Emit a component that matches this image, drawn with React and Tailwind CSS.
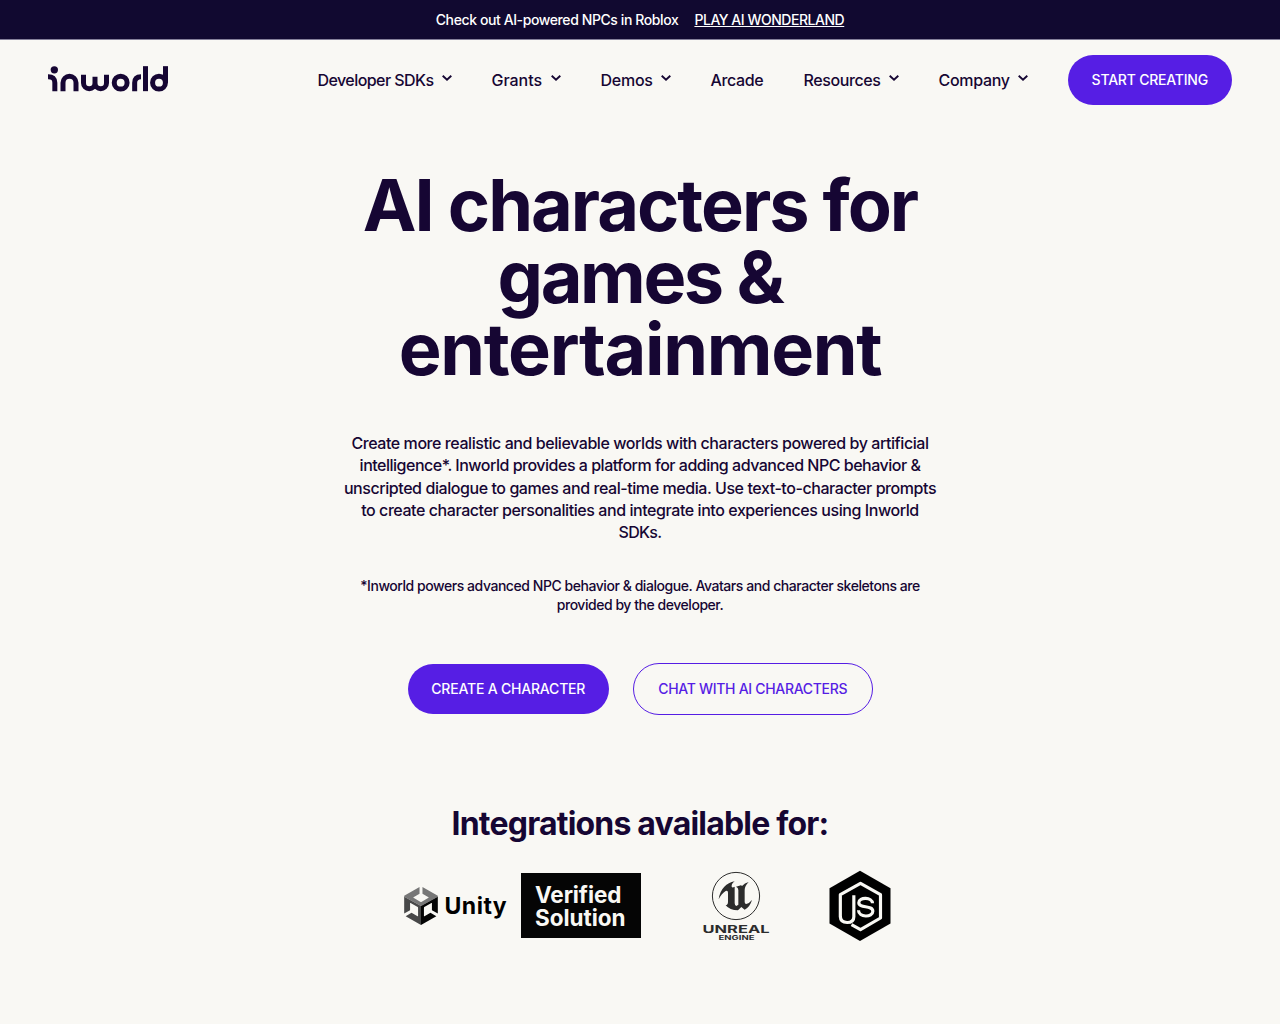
import { SiUnity } from "react-icons/si";

function InworldLogo() {
  return (
    <svg width="120" height="26" viewBox="54 47.500 360 78" fill="none" stroke="#160633" strokeWidth="15" role="img" aria-label="inworld">
      <circle cx="73" cy="59" r="11" fill="#160633" stroke="none" />
      <path d="M54 79.500Q74.500 79 74.500 98V123" />
      <path d="M99 123V98a19.500 19.500 0 0 1 39 0v25" />
      <path d="M160.500 74v24.500a17.250 17.250 0 0 0 34.500 0V80v18.500a17.250 17.250 0 0 0 34.500 0V74" />
      <circle cx="272" cy="97.500" r="19.300" />
      <path d="M314 123V98q0-18.500 19-18.500" />
      <path d="M346.500 48v75" />
      <circle cx="387" cy="97.500" r="19.300" />
      <path d="M406.500 48v50" />
    </svg>
  );
}

function Chevron() {
  return (
    <svg className="mb-[4px] ml-2 shrink-0" width="10" height="6" viewBox="0 0 10 6" fill="none" stroke="#160633" strokeWidth="1.9">
      <path d="M.7.800 5 4.700 9.300.800" />
    </svg>
  );
}

const navItems = [
  { label: "Developer SDKs", cls: "w-[116px] tracking-[-0.56px]", menu: true },
  { label: "Grants", cls: "w-[51px] tracking-[-0.02px]", menu: true },
  { label: "Demos", cls: "w-[52px] tracking-[-0.25px]", menu: true },
  { label: "Arcade", cls: "w-[53px] tracking-[-0.35px]", menu: false },
  { label: "Resources", cls: "w-[77px] tracking-[-0.4px]", menu: true },
  { label: "Company", cls: "w-[71px] tracking-[-0.3px]", menu: true },
];

const intro = [
  ["Create more realistic and believable worlds with characters powered by artificial", "tracking-[-0.435px]"],
  ["intelligence*. Inworld provides a platform for adding advanced NPC behavior &", "tracking-[-0.49px]"],
  ["unscripted dialogue to games and real-time media. Use text-to-character prompts", "tracking-[-0.43px]"],
  ["to create character personalities and integrate into experiences using Inworld", "tracking-[-0.43px]"],
  ["SDKs.", "tracking-[-0.7px]"],
];

function UnityMark() {
  return (
    <svg width="38" height="38" viewBox="0 0 24 24">
      <clipPath id="cube-top"><path d="M0 0H24V5.300L12 12 0 5.300z" /></clipPath>
      <clipPath id="cube-left"><path d="M0 5.300 12 12v12H0z" /></clipPath>
      <clipPath id="cube-right"><path d="M24 5.300 12 12v12h12z" /></clipPath>
      <g clipPath="url(#cube-top)"><SiUnity size={24} color="#777" /></g>
      <g clipPath="url(#cube-left)"><SiUnity size={24} color="#484848" /></g>
      <g clipPath="url(#cube-right)"><SiUnity size={24} color="#050505" /></g>
    </svg>
  );
}

function UnrealLogo() {
  return (
    <svg width="68" height="72" viewBox="702 870 68 72" fill="#2c2c2c">
      <circle cx="736" cy="896" r="23.600" fill="none" stroke="#2c2c2c" strokeWidth="1" />
      <g transform="translate(690 860) scale(.33333)">
        <path d="M86 118Q89 94 103 80 115 68 134 64 124 71 125 80 127 85 134 80V129Q134 137 139 138L145 134V90Q145 82 138 80L148 77Q154 74 156 78 164 69 176 66 164 78 164 90V126Q164 132 169 132 178 130 186 120 180 141 164 149L154 141 144 151Q119 151 107 136 114 135 114 126V98Q114 90 107 93 95 100 86 118Z" />
      </g>
      <text x="702.500" y="933.200" className="font-['Inter'] font-bold" fontSize="10.5" textLength="67" lengthAdjust="spacingAndGlyphs">UNREAL</text>
      <text x="718.500" y="940.300" className="font-['Inter'] font-bold" fontSize="6.5" textLength="36" lengthAdjust="spacingAndGlyphs">ENGINE</text>
    </svg>
  );
}

function NodeLogo() {
  return (
    <svg width="62" height="72" viewBox="829.500 870 62 72">
      <path d="M860.500 870.800 891 888.300v35.200L860.500 941 830 923.500v-35.200z" />
      <g transform="translate(690 860) scale(.33333)" fill="none" stroke="#f9f8f4" strokeWidth="9.5">
        <path strokeLinejoin="round" d="M486 194 513 209 573 174V104L513 70 452.500 104V170Q453 187 473 187.500 493 187 493 170V106" />
        <path d="M549 130C549 111 508 110 508 128 508 146 550 134 550 154 550 173 507 173 507 151" />
      </g>
    </svg>
  );
}

export default function App() {
  return (
    <div className="flex h-[1024px] w-[1280px] flex-col overflow-hidden bg-[#f9f8f4] font-['Inter',sans-serif] font-medium whitespace-nowrap text-[#160633]">
      <div className="flex h-10 shrink-0 items-center justify-center gap-4 border-b border-[#85809a] bg-[#110930] text-sm text-white">
        <span className="tracking-[-0.4px]">Check out AI-powered NPCs in Roblox</span>
        <a className="tracking-[-0.46px] underline">PLAY AI WONDERLAND</a>
      </div>

      <header className="flex h-[79px] shrink-0 items-center justify-between px-12">
        <div className="-mt-0.5"><InworldLogo /></div>
        <nav className="flex items-center gap-10 text-base">
          {navItems.map((item) => (
            <div key={item.label} className="flex items-center pt-px">
              <span className={item.cls}>{item.label}</span>
              {item.menu && <Chevron />}
            </div>
          ))}
          <a className="flex h-[50px] w-[164.500px] items-center justify-center rounded-full bg-[#561ee4] text-sm tracking-[-0.22px] text-white">START CREATING</a>
        </nav>
      </header>

      <main className="flex flex-col items-center text-center">
        <h1 className="mt-[50px] flex flex-col text-[72px] leading-[72px] font-bold">
          <span className="tracking-[-2px]">AI characters for</span>
          <span className="tracking-[-2.4px]">games &amp;</span>
          <span className="tracking-[-1.3px]">entertainment</span>
        </h1>
        <p className="mt-[47px] flex flex-col text-base leading-[22.300px]">
          {intro.map(([text, cls]) => <span key={text} className={cls}>{text}</span>)}
        </p>
        <p className="mt-[32.500px] flex flex-col text-sm leading-[19px]">
          <span className="tracking-[-0.45px]">*Inworld powers advanced NPC behavior &amp; dialogue. Avatars and character skeletons are</span>
          <span className="tracking-[-0.46px]">provided by the developer.</span>
        </p>
        <div className="mt-[49px] flex items-center gap-6 text-sm">
          <a className="flex h-[50px] w-[201.500px] items-center justify-center rounded-full bg-[#561ee4] tracking-[-0.2px] text-white">CREATE A CHARACTER</a>
          <a className="flex h-[52px] w-[239.500px] items-center justify-center rounded-full border border-[#561ee4] tracking-[-0.3px] text-[#561ee4]">CHAT WITH AI CHARACTERS</a>
        </div>
        <h2 className="mt-[89px] text-[32px] leading-[40px] font-bold tracking-[-0.8px]">Integrations available for:</h2>
      </main>

      <div className="mt-[26px] flex h-[72px] items-center pl-[401.500px] text-[23px] font-bold text-black">
        <UnityMark />
        <span className="ml-[5px] w-[63px] tracking-[0.5px]">Unity</span>
        <div className="ml-[13.500px] flex h-[65px] w-[119.500px] flex-col justify-center bg-[#050505] pl-[14px] text-[22.500px] leading-[23px] text-[#f9f8f4]">
          <span className="tracking-[-0.1px]">Verified</span>
          <span className="tracking-[-0.05px]">Solution</span>
        </div>
        <div className="ml-[61.500px]"><UnrealLogo /></div>
        <div className="ml-[59px]"><NodeLogo /></div>
      </div>
    </div>
  );
}
